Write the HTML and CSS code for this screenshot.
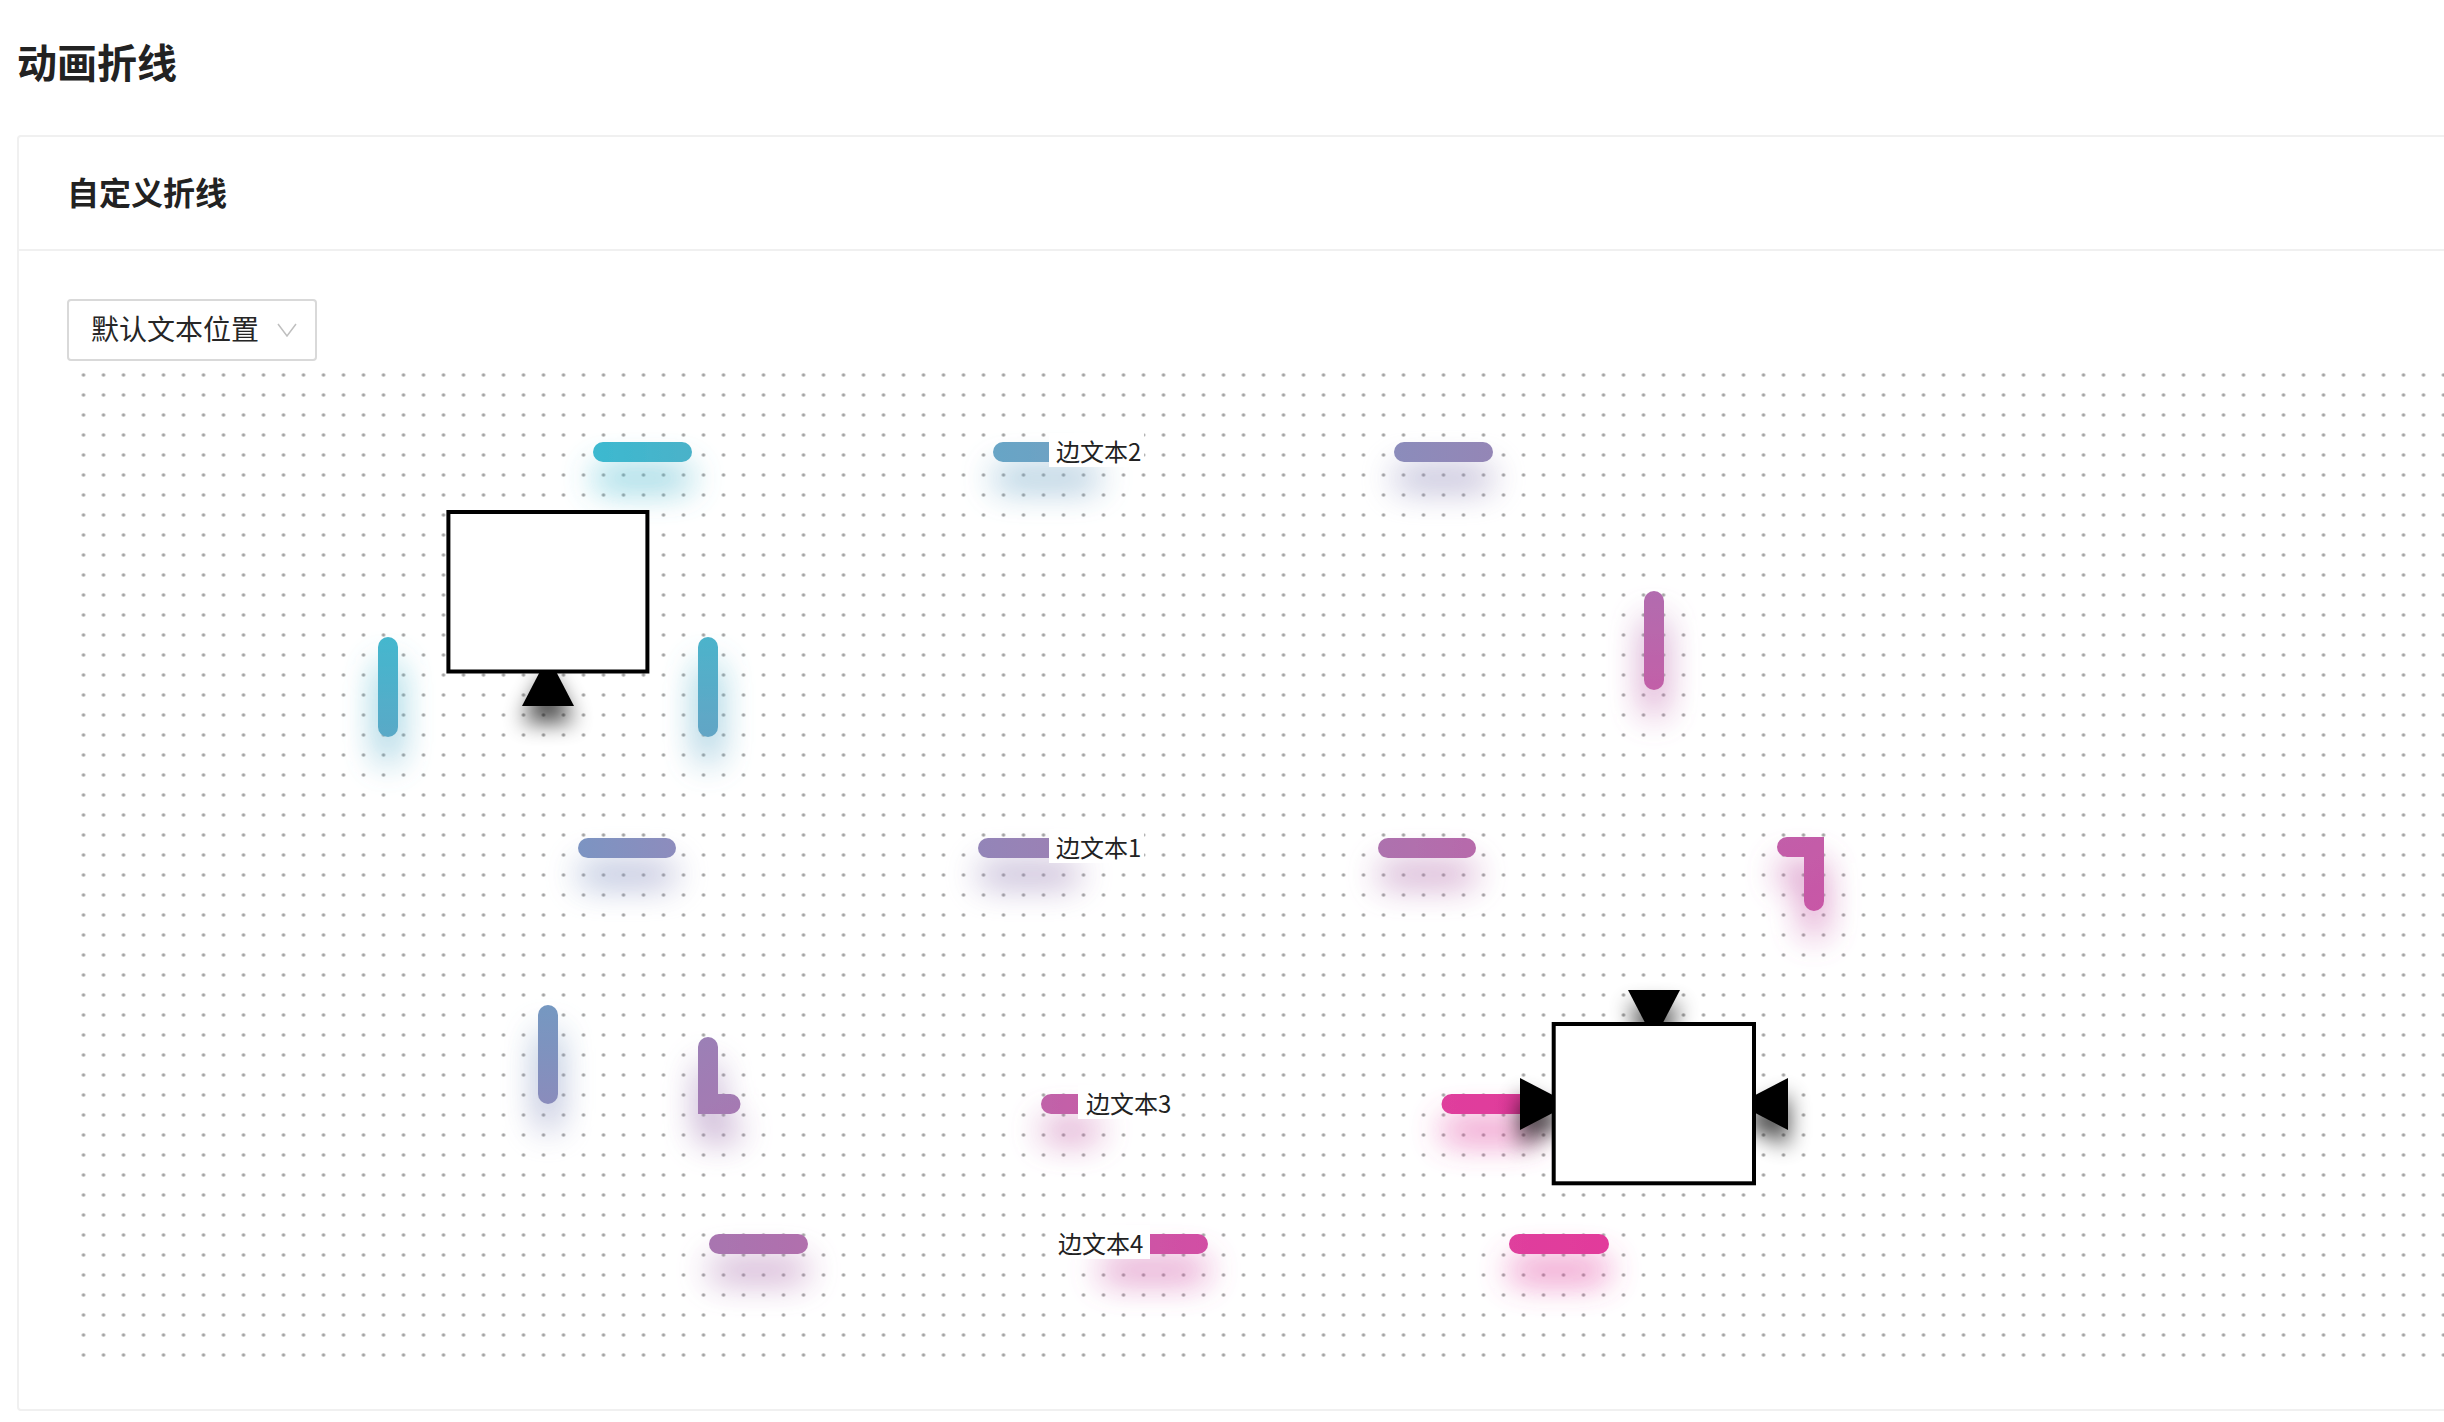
FILE: index.html
```html
<!DOCTYPE html>
<html lang="zh">
<head>
<meta charset="utf-8">
<title>动画折线</title>
<link rel="stylesheet" href="styles.css">
</head>
<body>
<div class="page">
  <h1 class="page-title">动画折线</h1>
  <section class="card">
    <header class="card-head">自定义折线</header>
    <div class="card-body">
      <div class="select">
        <span class="select-text">默认文本位置</span>
        <svg class="select-arrow" width="20" height="14" viewBox="0 0 20 14"><polyline points="1,1 10,13 19,1" fill="none" stroke="#bfbfbf" stroke-width="1.5"/></svg>
      </div>
      <div class="canvas">
        <svg class="diagram" width="2400" height="1000" viewBox="67 361 2400 1000">
          <defs>
            <pattern id="dots" patternUnits="userSpaceOnUse" x="73.5" y="365" width="20" height="20">
              <circle cx="10" cy="10" r="1.8" fill="#a2a2a2"/>
            </pattern>
            <filter id="glow" filterUnits="userSpaceOnUse" x="0" y="0" width="2600" height="1500">
              <feGaussianBlur in="SourceGraphic" stdDeviation="17" result="b"/>
              <feOffset in="b" dy="26" result="o"/>
              <feComponentTransfer in="o" result="f"><feFuncA type="linear" slope="0.75"/></feComponentTransfer>
              <feMerge><feMergeNode in="f"/><feMergeNode in="SourceGraphic"/></feMerge>
            </filter>
            <filter id="shade" filterUnits="userSpaceOnUse" x="0" y="0" width="2600" height="1500">
              <feGaussianBlur in="SourceAlpha" stdDeviation="11" result="b"/>
              <feOffset in="b" dy="16" result="o"/>
              <feComponentTransfer in="o" result="f"><feFuncA type="linear" slope="0.75"/></feComponentTransfer>
              <feMerge><feMergeNode in="f"/><feMergeNode in="SourceGraphic"/></feMerge>
            </filter>
            <linearGradient id="g1" gradientUnits="userSpaceOnUse" x1="593" y1="0" x2="692" y2="0"><stop offset="0" stop-color="#3cb9d0"/><stop offset="1" stop-color="#4ab2c9"/></linearGradient>
            <linearGradient id="g2" gradientUnits="userSpaceOnUse" x1="993" y1="0" x2="1090" y2="0"><stop offset="0" stop-color="#67a5c6"/><stop offset="1" stop-color="#72a0c2"/></linearGradient>
            <linearGradient id="g3" gradientUnits="userSpaceOnUse" x1="1394" y1="0" x2="1493" y2="0"><stop offset="0" stop-color="#8b8cbb"/><stop offset="1" stop-color="#9486b6"/></linearGradient>
            <linearGradient id="g4" gradientUnits="userSpaceOnUse" x1="0" y1="637" x2="0" y2="737"><stop offset="0" stop-color="#44b7ce"/><stop offset="1" stop-color="#5aa9c7"/></linearGradient>
            <linearGradient id="g5" gradientUnits="userSpaceOnUse" x1="0" y1="637" x2="0" y2="737"><stop offset="0" stop-color="#4cb3cb"/><stop offset="1" stop-color="#63a5c5"/></linearGradient>
            <linearGradient id="g6" gradientUnits="userSpaceOnUse" x1="0" y1="591" x2="0" y2="690"><stop offset="0" stop-color="#b26caf"/><stop offset="1" stop-color="#c260a8"/></linearGradient>
            <linearGradient id="g7" gradientUnits="userSpaceOnUse" x1="578" y1="0" x2="676" y2="0"><stop offset="0" stop-color="#7c94c2"/><stop offset="1" stop-color="#8d8cbd"/></linearGradient>
            <linearGradient id="g8" gradientUnits="userSpaceOnUse" x1="978" y1="0" x2="1070" y2="0"><stop offset="0" stop-color="#9385b8"/><stop offset="1" stop-color="#9c80b4"/></linearGradient>
            <linearGradient id="g9" gradientUnits="userSpaceOnUse" x1="1378" y1="0" x2="1476" y2="0"><stop offset="0" stop-color="#ad72ae"/><stop offset="1" stop-color="#b76aab"/></linearGradient>
            <linearGradient id="g10" gradientUnits="userSpaceOnUse" x1="1777" y1="837" x2="1824" y2="911"><stop offset="0" stop-color="#c25ea9"/><stop offset="1" stop-color="#c857a6"/></linearGradient>
            <linearGradient id="g11" gradientUnits="userSpaceOnUse" x1="0" y1="1005" x2="0" y2="1104"><stop offset="0" stop-color="#7598c1"/><stop offset="1" stop-color="#8a8cbc"/></linearGradient>
            <linearGradient id="g12" gradientUnits="userSpaceOnUse" x1="698" y1="1037" x2="741" y2="1114"><stop offset="0" stop-color="#9b80b6"/><stop offset="1" stop-color="#a679b2"/></linearGradient>
            <linearGradient id="g13" gradientUnits="userSpaceOnUse" x1="1041" y1="0" x2="1090" y2="0"><stop offset="0" stop-color="#c063a9"/><stop offset="1" stop-color="#c65ea7"/></linearGradient>
            <linearGradient id="g14" gradientUnits="userSpaceOnUse" x1="1441" y1="0" x2="1525" y2="0"><stop offset="0" stop-color="#df3f9d"/><stop offset="1" stop-color="#e13a9b"/></linearGradient>
            <linearGradient id="g15" gradientUnits="userSpaceOnUse" x1="709" y1="0" x2="808" y2="0"><stop offset="0" stop-color="#a875b0"/><stop offset="1" stop-color="#b16fad"/></linearGradient>
            <linearGradient id="g16" gradientUnits="userSpaceOnUse" x1="1110" y1="0" x2="1208" y2="0"><stop offset="0" stop-color="#cb56a6"/><stop offset="1" stop-color="#d24ea4"/></linearGradient>
            <linearGradient id="g17" gradientUnits="userSpaceOnUse" x1="1509" y1="0" x2="1609" y2="0"><stop offset="0" stop-color="#df3f9d"/><stop offset="1" stop-color="#e23a9b"/></linearGradient>
          </defs>

          <rect x="67" y="361" width="2400" height="1000" fill="url(#dots)"/>

          <g class="edges" filter="url(#glow)" fill="none" stroke-width="20" stroke-linecap="round" stroke-linejoin="miter">
            <path d="M603 452H682" stroke="url(#g1)"/>
            <path d="M1003 452H1090" stroke="url(#g2)"/>
            <path d="M1404 452H1483" stroke="url(#g3)"/>
            <path d="M388 647V727" stroke="url(#g4)"/>
            <path d="M708 647V727" stroke="url(#g5)"/>
            <path d="M1654 601V680" stroke="url(#g6)"/>
            <path d="M588 848H666" stroke="url(#g7)"/>
            <path d="M988 848H1070" stroke="url(#g8)"/>
            <path d="M1388 848H1466" stroke="url(#g9)"/>
            <path d="M1787 847H1814V901" stroke="url(#g10)"/>
            <path d="M548 1015V1094" stroke="url(#g11)"/>
            <path d="M708 1047V1104H730.5" stroke="url(#g12)"/>
            <path d="M1051 1104H1090" stroke="url(#g13)"/>
            <path d="M1451.5 1104H1530" stroke="url(#g14)"/>
            <path d="M719 1244H798" stroke="url(#g15)"/>
            <path d="M1110 1244H1198" stroke="url(#g16)"/>
            <path d="M1519 1244H1599" stroke="url(#g17)"/>
          </g>

          <g class="labels">
            <rect x="1049" y="433" width="95" height="34" fill="#fff"/>
            <text x="1056" y="461">边文本2</text>
            <rect x="1049" y="829" width="95" height="34" fill="#fff"/>
            <text x="1056" y="857">边文本1</text>
            <rect x="1078" y="1085" width="100" height="34" fill="#fff"/>
            <text x="1086" y="1113">边文本3</text>
            <rect x="1056" y="1225" width="94" height="34" fill="#fff"/>
            <text x="1058" y="1253">边文本4</text>
          </g>

          <g class="arrows" filter="url(#shade)" fill="#000">
            <polygon points="522,706 574,706 548,656"/>
            <polygon points="1628,990 1680,990 1654,1040"/>
            <polygon points="1520,1078 1520,1130 1570,1104"/>
            <polygon points="1788,1078 1788,1130 1738,1104"/>
          </g>

          <g class="nodes" fill="#fff" stroke="#000" stroke-width="4">
            <rect x="448.4" y="512" width="199" height="159.5"/>
            <rect x="1553.7" y="1024" width="200.3" height="159.3"/>
          </g>
        </svg>
      </div>
    </div>
  </section>
</div>
</body>
</html>
```

FILE: styles.css
```css
html, body {
  margin: 0;
  padding: 0;
  overflow: hidden;
  background: #fff;
}

body {
  font-family: "Noto Sans CJK SC", "Noto Sans", sans-serif;
  color: #262626;
}

.page {
  width: 2600px;
  padding: 41px 0 0 17px;
}

.page-title {
  margin: 0;
  font-size: 40px;
  line-height: 40px;
  font-weight: 700;
  color: #222;
}

.card {
  margin-top: 54px;
  border: 2px solid #f0f0f0;
  border-radius: 4px;
  background: #fff;
}

.card-head {
  box-sizing: border-box;
  height: 114px;
  display: flex;
  align-items: center;
  padding: 0 0 4px 48px;
  font-size: 32px;
  font-weight: 700;
  color: #222;
  border-bottom: 2px solid #f0f0f0;
}

.card-body {
  padding: 48px;
}

.select {
  box-sizing: border-box;
  width: 250px;
  height: 62px;
  border: 2px solid #d9d9d9;
  border-radius: 4px;
  display: flex;
  align-items: center;
  padding: 0 0 4px 22px;
  gap: 18px;
}

.select-text {
  font-size: 28px;
  color: #262626;
  line-height: 1;
}

.select-arrow {
  display: block;
  margin-top: 4px;
}

.canvas {
  position: relative;
  height: 1000px;
}

.diagram {
  position: absolute;
  left: 0;
  top: 0;
  display: block;
}

.labels text {
  font-family: "Noto Sans CJK SC", "Noto Sans", sans-serif;
  font-size: 24px;
  fill: #222;
}
```
